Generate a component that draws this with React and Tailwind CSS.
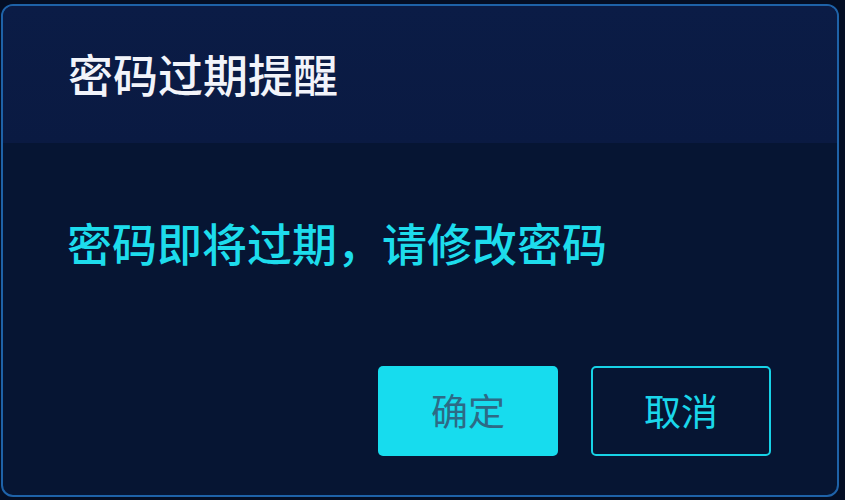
import React from "react";

const font = { fontFamily: '"Noto Sans CJK SC", "Noto Sans", sans-serif' };

const PasswordExpiredDialog = () => {
  return (
    <div className="w-[845px] h-[500px] bg-[#040e24] overflow-hidden pt-[4px] pl-[1px]" style={font}>
      <div className="w-[838px] h-[493px] rounded-[12px] border-2 border-[#1e62a8] bg-[#061533] overflow-hidden flex flex-col">
        {/* header */}
        <div className="h-[137px] shrink-0 flex items-center px-[65px] pb-[3px] bg-gradient-to-b from-[#0b1c46] to-[#0a1a42]">
          <span className="text-[45px] leading-none text-[#f2f4fa] font-medium">密码过期提醒</span>
        </div>

        {/* body */}
        <div className="flex-1 flex flex-col px-[64px] pt-[70px]">
          <p className="text-[45px] leading-[60px] text-[#1ddcec] font-medium">
            密码即将过期，请修改密码
          </p>
          <div className="flex justify-end gap-[33px] mt-[93px] pr-[2px]">
            <button className="w-[180px] h-[90px] rounded-[5px] bg-[#17dcee] text-[37px] text-[#2d6a86]">
              确定
            </button>
            <button className="w-[180px] h-[90px] rounded-[5px] border-2 border-[#17d2e6] text-[37px] text-[#1ad6ea]">
              取消
            </button>
          </div>
        </div>
      </div>
    </div>
  );
};

export default function App() {
  return <PasswordExpiredDialog />;
}
